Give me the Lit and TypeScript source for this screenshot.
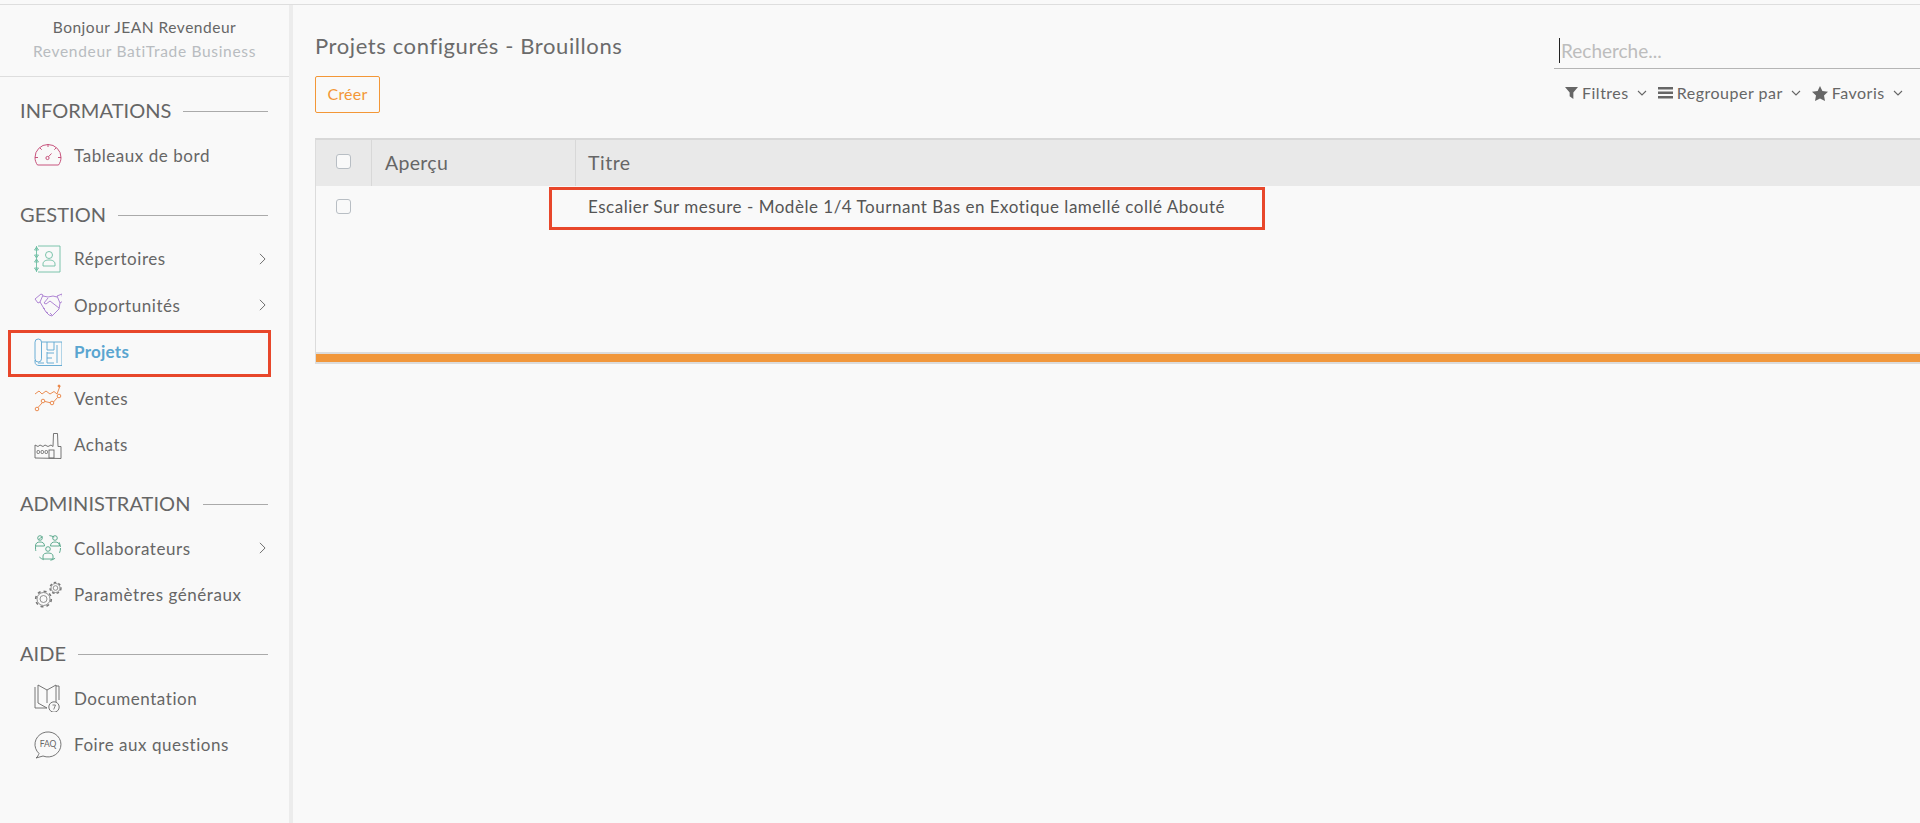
import { LitElement, html, css, svg } from "lit";
import { customElement } from "lit/decorators.js";

const icons: Record<string, unknown> = {
  gauge: svg`<g stroke="#c2426f" fill="none" stroke-width=".9"><path d="M3.500 24h21c1.500-2 2.500-4.500 2.500-7.500A13 13 0 0 0 1 16.500c0 3 1 5.500 2.500 7.500z"/><path d="M14 3.500v2.500M6 7l1.700 1.700M22 7l-1.700 1.700M1 16.500h3M27 16.500h-3"/><circle cx="13.500" cy="17" r="1.600"/><path d="M14.500 15.700l3-3.200"/></g>`,
  contacts: svg`<g stroke="#6dbda3" fill="none" stroke-width=".9"><path d="M4 1h22v26H4"/><path d="M2.500 1v26M.5 5h4l-2 -3zM.5 10h4l-2 3zM.5 17h4l-2 -3zM.5 23h4l-2 3z"/><circle cx="15" cy="10" r="3.500"/><path d="M9 21v-2c0-3 3-4 6-4s6 1 6 4v2z"/></g>`,
  hands: svg`<g stroke="#a678cf" fill="none" stroke-width=".9"><path d="M1 8l6-5 2 1 -3 7-2 1zM28 3l1 7-3 2-3-7z"/><path d="M9 5l5 1 5-1 4 1M6 11l6 10 3 3 3 1 7-7 1-6M14 7l-4 5 2 1 4-3 9 7M11 18l-2-1M14 22l-2-1M18 24l-2-2"/></g>`,
  plan: svg`<g stroke="#5aa5d0" fill="none" stroke-width=".9"><rect x="1" y="1" width="6.500" height="23" rx="3.200"/><path d="M1 22v2c0 2.500 2 3.500 4 3.500h23V4H7.500"/><path d="M13 4v8h7V4M13 14v11M13 15h7M13 20h5M13 25h7M23 7v18M4 25h6"/></g>`,
  chart: svg`<g stroke="#e9803f" fill="none" stroke-width=".9"><path d="M1 10l4-3 3 3 4-3 4 3 4-2.500 3 2.500 3-8"/><circle cx="25" cy="2" r="1" fill="#e9803f"/><circle cx="3" cy="25" r="1.800"/><circle cx="9" cy="17" r="1.800"/><circle cx="18" cy="19" r="1.800"/><circle cx="25" cy="12" r="1.800"/><path d="M4 23.500l4-4.500M11 17.500l5.200 1.200M19.500 18l4-4.500"/></g>`,
  factory: svg`<g stroke="#666" fill="none" stroke-width=".9"><path d="M1 27V14l3 1.500 2-1.500 3 1.500 2-1.500 3 1.500 3-1.500 2 1.500 .5-13h4l.5 13h3v12z"/><rect x="3" y="19.500" width="2.500" height="3" rx="1"/><rect x="7" y="19.500" width="2.500" height="3" rx="1"/><rect x="11" y="19.500" width="2.500" height="3" rx="1"/><rect x="15" y="19" width="5" height="8"/></g>`,
  people: svg`<g stroke="#4fa384" fill="none" stroke-width=".9"><circle cx="14" cy="14" r="12.500" stroke-dasharray="5 7"/><circle cx="6" cy="4" r="2.300"/><path d="M1.500 12c0-3 2-4 4.500-4s4.500 1 4.500 4z"/><circle cx="21" cy="4" r="2.300"/><path d="M16.500 12c0-3 2-4 4.500-4s4.500 1 4.500 4z"/><circle cx="14" cy="15" r="2.300"/><path d="M9 25v-3c0-2 2-3 5-3s5 1 5 3v3z"/></g>`,
  gears: svg`<g stroke="#777" fill="none" stroke-width=".8"><circle cx="9.500" cy="18" r="3.500"/><circle cx="9.500" cy="18" r="7.800" stroke-width="1.600" stroke-dasharray="3 3.100"/><circle cx="9.500" cy="18" r="6.500"/><circle cx="21.500" cy="7" r="2.300"/><circle cx="21.500" cy="7" r="5.500" stroke-width="1.400" stroke-dasharray="2.500 2.200"/><circle cx="21.500" cy="7" r="4.500"/></g>`,
  book: svg`<g stroke="#666" fill="none" stroke-width=".9"><path d="M1 3v21h12M13 6L4 1v18l9 5M13 6l9-5v17M13 6v13M22 2h3v14"/><circle cx="20" cy="23" r="5.200" fill="#f9f9f9"/><path d="M18.500 21h3l-1.800 4.500" stroke-width=".8"/></g>`,
};

const caret = html`<svg class="caret" viewBox="0 0 8 14" width="7" height="12"><path d="M1 1l6 6-6 6" fill="none" stroke="#666" stroke-width="1.100"/></svg>`;

function ic(name: string) {
  return html`<svg class="ic" viewBox="0 0 28 28" width="28" height="28">${icons[name]}</svg>`;
}

const faq = html`<span class="faq"><svg class="ic" viewBox="0 0 28 28" width="28" height="28"><path d="M5 22.500A13 12.500 0 1 1 9 25l-7 2c1.500-1 2.500-3 3-4.500z" fill="none" stroke="#666" stroke-width=".9"/></svg><span class="faqt">FAQ</span></span>`;

const chev = html`<svg class="chev" viewBox="0 0 10 6" width="10" height="6"><path d="M1 1l4 4 4-4" fill="none" stroke="#666" stroke-width="1.100"/></svg>`;

interface Item { label: string; icon?: string; arrow?: boolean; active?: boolean; faq?: boolean }
const sections: { title: string; items: Item[] }[] = [
  { title: "INFORMATIONS", items: [{ label: "Tableaux de bord", icon: "gauge" }] },
  { title: "GESTION", items: [
    { label: "Répertoires", icon: "contacts", arrow: true },
    { label: "Opportunités", icon: "hands", arrow: true },
    { label: "Projets", icon: "plan", active: true },
    { label: "Ventes", icon: "chart" },
    { label: "Achats", icon: "factory" },
  ] },
  { title: "ADMINISTRATION", items: [
    { label: "Collaborateurs", icon: "people", arrow: true },
    { label: "Paramètres généraux", icon: "gears" },
  ] },
  { title: "AIDE", items: [
    { label: "Documentation", icon: "book" },
    { label: "Foire aux questions", faq: true },
  ] },
];

@customElement("app-root")
export class AppRoot extends LitElement {
  static styles = css`
    :host { display: block; height: 823px; overflow: hidden; background: #f9f9f9; color: #666;
      font-family: "Lato", "Noto Sans", sans-serif; font-size: 16px; }
    .shell { display: flex; height: 818px; margin-top: 4px; border-top: 1px solid #dedede; }
    .side { width: 289px; flex: none; border-right: 4px solid #ececec; box-sizing: content-box; }
    .hello { height: 72px; border-bottom: 1px solid #dedede; box-sizing: border-box; text-align: center;
      padding-top: 10px; line-height: 24px; font-size: 15.500px; letter-spacing: .52px; color: #666; }
    .hello .sub { color: #b8bcc0; letter-spacing: .68px; }
    .section { padding-top: 20px; }
    .hello + .section { padding-top: 18px; }
    .sec-title { display: flex; align-items: center; gap: 12px; height: 30px; margin: 0 21px 0 20px;
      font-size: 20px; letter-spacing: .05px; color: #666; margin-bottom: 7px; }
    .sec-title i { flex: 1; height: 1px; background: #aaa; margin-top: 3px; }
    .item { position: relative; display: flex; align-items: center; height: 46.500px; box-sizing: border-box; margin: 0 20px 0 10px;
      padding: 0 3px 0 24px; font-size: 17px; letter-spacing: .55px; color: #666; }
    .item .ic, .faq { margin-right: 12px; flex: none; }
    .item .lbl { flex: 1; }
    .item.active { color: #5aa5d0; font-weight: 700; letter-spacing: .25px; }
    .item.active::after { content: ""; position: absolute; left: -2px; right: -2px; top: 1px; bottom: -2px; border: 3px solid #e8472b; pointer-events: none; }
    .faq { position: relative; display: block; width: 28px; height: 28px; }
    .faq .ic { margin: 0; }
    .faqt { position: absolute; left: 0; right: 0; top: 7px; text-align: center; font-size: 8.500px; font-weight: 400; line-height: 12px; letter-spacing: 0; }
    .main { flex: 1; min-width: 0; padding-left: 22px; }
    .panel { display: flex; justify-content: space-between; height: 133px; }
    h1 { margin: 27px 0 0; font-size: 22px; letter-spacing: .6px; font-weight: 400; line-height: 28px; color: #6b6b6b; }
    .create { display: block; margin-top: 16px; width: 65px; height: 37px; box-sizing: border-box; border: 1px solid #f39737;
      border-radius: 2px; background: none; color: #f39737; font: inherit; font-size: 16px; letter-spacing: .2px; padding: 0 0 2px; }
    .tools { width: 366px; flex: none; }
    .search { height: 64px; box-sizing: border-box; border-bottom: 1px solid #b5b5b5; padding: 33px 0 0 5px;
      font-size: 19px; line-height: 26px; color: #bdbdbd; display: flex; align-items: flex-start; }
    .cursor { width: 1px; height: 25px; background: #222; margin-right: 1px; }
    .filters { display: flex; margin: 14px 0 0 11px; gap: 11px; font-size: 16px; letter-spacing: .5px; line-height: 20px; align-items: center; }
    .filters span { display: flex; align-items: center; gap: 4px; }
    .chev { margin-left: 4px; }
    .table { border-top: 2px solid #d8d8d8; border-left: 1px solid #dcdcdc; }
    .head { display: grid; grid-template-columns: 56px 204px 1fr; height: 46px; background: #e9e9e9; font-size: 19.500px; letter-spacing: .3px; color: #666; }
    .head > div { border-right: 1px solid #d8d8d8; display: flex; align-items: center; padding-left: 13px; padding-bottom: 2px; }
    .head > div:first-child { padding-left: 20px; padding-bottom: 3px; }
    .head > div:last-child { border-right: 0; padding-left: 12px; padding-bottom: 1px; letter-spacing: .5px; }
    .cb { width: 15px; height: 15px; box-sizing: border-box; border: 1px solid #b8bec4; border-radius: 3px; background: #f9f9f9; display: block; }
    .body { height: 166px; border-bottom: 2px solid #dcdcdc; box-sizing: content-box; }
    .row { display: grid; grid-template-columns: 56px 177px 1fr; }
    .row .cb { margin: 13px 0 0 20px; }
    .ttl { display: inline-block; margin-top: 1px; padding: 0 37px 0 36px; height: 43px; line-height: 34px; box-sizing: border-box;
      border: 3px solid #e8472b; font-size: 17px; letter-spacing: .52px; color: #555; white-space: nowrap; }
    .bar { height: 8px; background: #f1973b; border-bottom: 2px solid #dcdcdc; box-sizing: content-box; }
  `;

  render() {
    return html`<div class="shell">
      <aside class="side">
        <div class="hello"><div>Bonjour JEAN Revendeur</div><div class="sub">Revendeur BatiTrade Business</div></div>
        ${sections.map((s) => html`<div class="section">
          <div class="sec-title"><span>${s.title}</span><i></i></div>
          ${s.items.map((it) => html`<div class="item ${it.active ? "active" : ""}">
            ${it.faq ? faq : ic(it.icon!)}
            <span class="lbl">${it.label}</span>
            ${it.arrow ? caret : ""}
          </div>`)}
        </div>`)}
      </aside>
      <main class="main">
        <div class="panel">
          <div>
            <h1>Projets configurés - Brouillons</h1>
            <button class="create">Créer</button>
          </div>
          <div class="tools">
            <div class="search"><i class="cursor"></i>Recherche...</div>
            <div class="filters">
              <span><svg viewBox="0 0 14 15" width="13" height="14"><path d="M0 1h14L9 7v7L5 11V7z" fill="#666"/></svg>Filtres${chev}</span>
              <span><svg viewBox="0 0 15 12" width="15" height="12"><path d="M0 0h15v2.500H0zM0 4.500h15v2.500H0zM0 9h15v2.500H0z" fill="#666"/></svg>Regrouper par${chev}</span>
              <span><svg viewBox="0 0 16 15" width="16" height="15"><path d="M8 0l2.400 5 5.600.700-4 3.900 1 5.400L8 12.400 3 15l1-5.400-4-3.900L5.600 5z" fill="#666"/></svg>Favoris${chev}</span>
            </div>
          </div>
        </div>
        <div class="table">
          <div class="head"><div><i class="cb"></i></div><div>Aperçu</div><div>Titre</div></div>
          <div class="body">
            <div class="row"><div><i class="cb"></i></div><div></div><div><span class="ttl">Escalier Sur mesure - Modèle 1/4 Tournant Bas en Exotique lamellé collé Abouté</span></div></div>
          </div>
          <div class="bar"></div>
        </div>
      </main>
    </div>`;
  }
}
